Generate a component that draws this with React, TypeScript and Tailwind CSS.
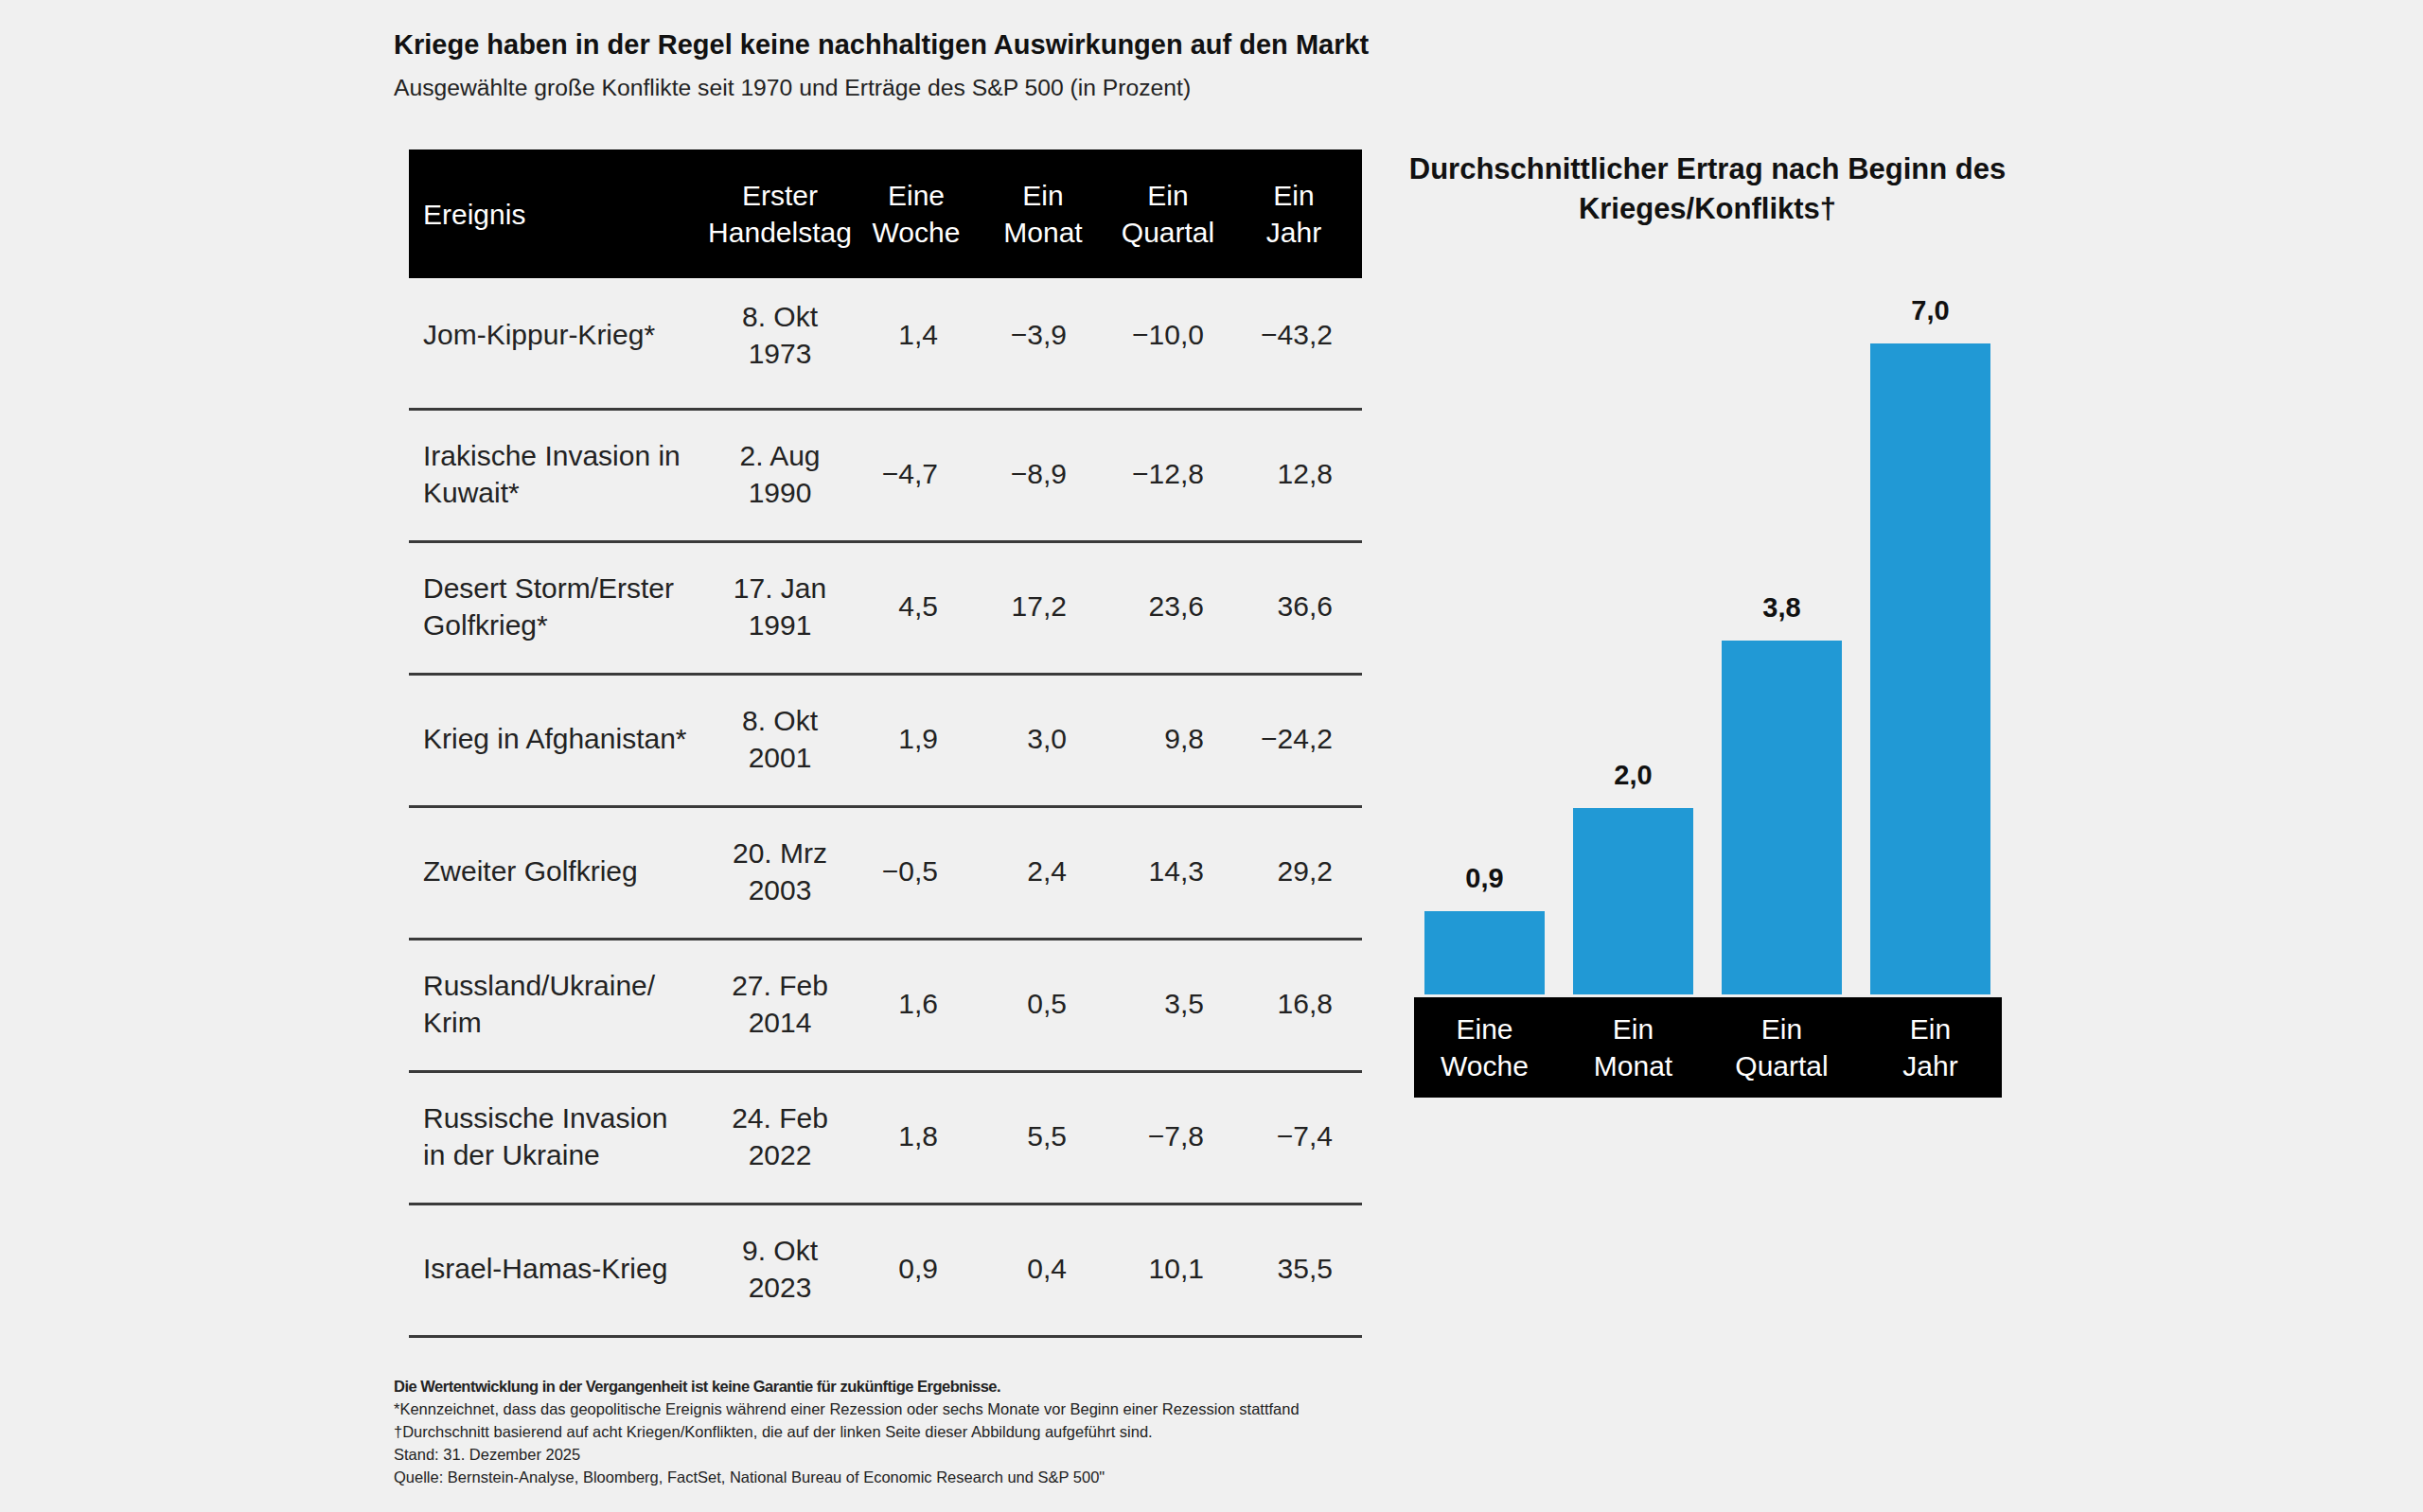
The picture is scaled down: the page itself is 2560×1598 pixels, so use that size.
type Row = {
  event: string[];
  date: string[];
  week: string;
  month: string;
  quarter: string;
  year: string;
};

type Bar = {
  label: string[];
  value: number;
  text: string;
};

const rows: Row[] = [
  { event: ["Jom-Kippur-Krieg*"], date: ["8. Okt", "1973"], week: "1,4", month: "−3,9", quarter: "−10,0", year: "−43,2" },
  { event: ["Irakische Invasion in", "Kuwait*"], date: ["2. Aug", "1990"], week: "−4,7", month: "−8,9", quarter: "−12,8", year: "12,8" },
  { event: ["Desert Storm/Erster", "Golfkrieg*"], date: ["17. Jan", "1991"], week: "4,5", month: "17,2", quarter: "23,6", year: "36,6" },
  { event: ["Krieg in Afghanistan*"], date: ["8. Okt", "2001"], week: "1,9", month: "3,0", quarter: "9,8", year: "−24,2" },
  { event: ["Zweiter Golfkrieg"], date: ["20. Mrz", "2003"], week: "−0,5", month: "2,4", quarter: "14,3", year: "29,2" },
  { event: ["Russland/Ukraine/", "Krim"], date: ["27. Feb", "2014"], week: "1,6", month: "0,5", quarter: "3,5", year: "16,8" },
  { event: ["Russische Invasion", "in der Ukraine"], date: ["24. Feb", "2022"], week: "1,8", month: "5,5", quarter: "−7,8", year: "−7,4" },
  { event: ["Israel-Hamas-Krieg"], date: ["9. Okt", "2023"], week: "0,9", month: "0,4", quarter: "10,1", year: "35,5" },
];

const bars: Bar[] = [
  { label: ["Eine", "Woche"], value: 0.9, text: "0,9" },
  { label: ["Ein", "Monat"], value: 2.0, text: "2,0" },
  { label: ["Ein", "Quartal"], value: 3.8, text: "3,8" },
  { label: ["Ein", "Jahr"], value: 7.0, text: "7,0" },
];

// px per percentage point in the bar chart
const SCALE = 98.3;

const gridCols = "grid grid-cols-[328px_128px_160px_108px_156px_110px]";

function Lines({ lines }: { lines: string[] }) {
  return (
    <>
      {lines.map((l) => (
        <div key={l} className="whitespace-nowrap">
          {l}
        </div>
      ))}
    </>
  );
}

function Centered({ lines }: { lines: string[] }) {
  return (
    <div className="flex flex-col items-center text-center">
      <Lines lines={lines} />
    </div>
  );
}

function TableHeader() {
  return (
    <div className={`${gridCols} h-[136px] items-center bg-black text-white`}>
      <div className="pl-[15px]">Ereignis</div>
      <Centered lines={["Erster", "Handelstag"]} />
      <Centered lines={["Eine", "Woche"]} />
      <Centered lines={["Ein", "Monat"]} />
      <Centered lines={["Ein", "Quartal"]} />
      <Centered lines={["Ein", "Jahr"]} />
    </div>
  );
}

function TableRow({ row, first }: { row: Row; first: boolean }) {
  return (
    <div
      className={`${gridCols} h-[140px] items-center border-b-[3px] border-[#3a3a3a] text-[#222] ${
        first ? "pb-[18px]" : "pb-[4px]"
      }`}
    >
      <div className="pl-[15px]">
        <Lines lines={row.event} />
      </div>
      <Centered lines={row.date} />
      <div className="pr-[57px] text-right">{row.week}</div>
      <div className="pr-[29px] text-right">{row.month}</div>
      <div className="pr-[40px] text-right">{row.quarter}</div>
      <div className="pr-[14px] text-right">{row.year}</div>
    </div>
  );
}

function Chart() {
  return (
    <div className="ml-[45px] flex w-[640px] flex-col items-center">
      <h2 className="whitespace-nowrap text-center text-[31px] font-bold leading-[42px] text-[#111]">
        Durchschnittlicher Ertrag nach Beginn des
        <br />
        Krieges/Konflikts†
      </h2>
      <div className="mt-[70px] flex h-[739px] items-end gap-[30px]">
        {bars.map((b) => (
          <div key={b.text} className="flex w-[127px] flex-col items-center">
            <div className="mb-[19px] text-[29px] font-bold leading-[32px] text-[#111]">{b.text}</div>
            <div className="w-full bg-[#2199d5]" style={{ height: Math.round(b.value * SCALE) }} />
          </div>
        ))}
      </div>
      <div className="mt-[3px] flex h-[106px] w-[621px] items-center justify-center gap-[30px] bg-black text-[30px] leading-[39px] text-white">
        {bars.map((b) => (
          <div key={b.text} className="flex w-[127px] flex-col items-center text-center">
            <Lines lines={b.label} />
          </div>
        ))}
      </div>
    </div>
  );
}

export default function App() {
  return (
    <div className="min-h-[1598px] w-full bg-[#f0f0f0] font-['Liberation_Sans',Arial,sans-serif]">
      <div className="pl-[416px] pt-[29px]">
        <h1 className="whitespace-nowrap text-[29px] font-bold leading-[36px] text-[#111]">
          Kriege haben in der Regel keine nachhaltigen Auswirkungen auf den Markt
        </h1>
        <p className="mt-[13px] whitespace-nowrap text-[24.7px] leading-[30px] text-[#222]">
          Ausgewählte große Konflikte seit 1970 und Erträge des S&amp;P 500 (in Prozent)
        </p>

        <div className="mt-[50px] flex items-start">
          <div className="ml-[16px] w-[1007px] text-[30px] leading-[39px]">
            <TableHeader />
            {rows.map((r, i) => (
              <TableRow key={r.event[0]} row={r} first={i === 0} />
            ))}
          </div>
          <Chart />
        </div>

        <div className="mt-[39px] whitespace-nowrap text-[16.5px] leading-[24px] text-[#222]">
          <p className="font-bold tracking-[-0.03em]">
            Die Wertentwicklung in der Vergangenheit ist keine Garantie für zukünftige Ergebnisse.
          </p>
          <p>
            *Kennzeichnet, dass das geopolitische Ereignis während einer Rezession oder sechs Monate vor Beginn einer
            Rezession stattfand
          </p>
          <p>†Durchschnitt basierend auf acht Kriegen/Konflikten, die auf der linken Seite dieser Abbildung aufgeführt sind.</p>
          <p>Stand: 31. Dezember 2025</p>
          <p>Quelle: Bernstein-Analyse, Bloomberg, FactSet, National Bureau of Economic Research und S&amp;P 500"</p>
        </div>
      </div>
    </div>
  );
}
